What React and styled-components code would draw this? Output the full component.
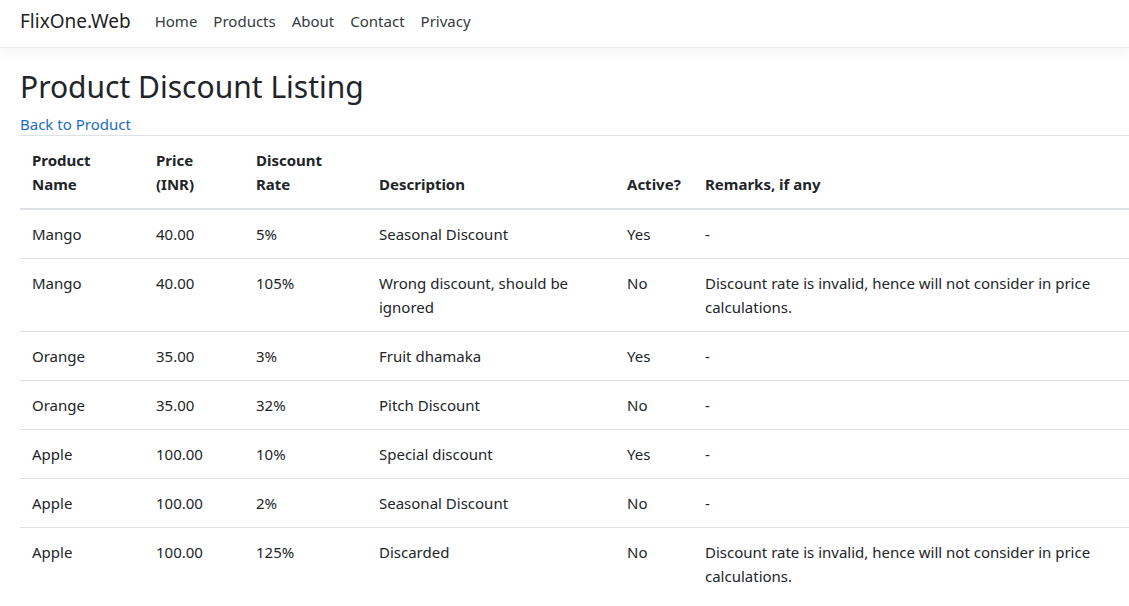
import React from 'react';
import styled, { createGlobalStyle } from 'styled-components';

const GlobalStyle = createGlobalStyle`
  html, body {
    margin: 0;
    padding: 0;
    background: #fff;
  }
  body {
    font-family: 'Segoe UI', 'Noto Sans', sans-serif;
    font-size: 15px;
    line-height: 24px;
    color: #212529;
  }
  * {
    box-sizing: border-box;
  }
`;

const Navbar = styled.header`
  height: 48px;
  display: flex;
  align-items: center;
  padding: 0 20px 6px;
  background: #fff;
  border-bottom: 1px solid #e5ece9;
  box-shadow: 0 4px 12px rgba(0, 0, 0, 0.05);
  margin-bottom: 21px;
`;

const Brand = styled.a`
  font-size: 19px;
  line-height: 30px;
  color: rgba(0, 0, 0, 0.9);
  text-decoration: none;
  margin-right: 16px;
`;

const NavList = styled.nav`
  display: flex;
`;

const NavLink = styled.a`
  padding: 0 8px;
  color: #343a40;
  text-decoration: none;
`;

const Main = styled.main`
  padding-left: 20px;
`;

const Title = styled.h1`
  font-size: 30px;
  font-weight: 400;
  line-height: 36px;
  margin: 0 0 8px;
`;

const BackLink = styled.a`
  display: block;
  color: #1b6ec2;
  text-decoration: none;
  line-height: 22px;
`;

const Table = styled.table`
  width: 100%;
  border-collapse: collapse;
  table-layout: fixed;
`;

const Th = styled.th`
  padding: 12px;
  text-align: left;
  vertical-align: bottom;
  font-weight: 700;
  border-top: 1px solid #dee2e6;
  border-bottom: 2px solid #dee2e6;
`;

const Td = styled.td`
  padding: 12px;
  vertical-align: top;
  border-top: 1px solid #dee2e6;
`;

const columns = [
  { label: 'Product Name', width: 124 },
  { label: 'Price (INR)', width: 100 },
  { label: 'Discount Rate', width: 123 },
  { label: 'Description', width: 248 },
  { label: 'Active?', width: 78 },
  { label: 'Remarks, if any' },
];

const invalid = 'Discount rate is invalid, hence will not consider in price calculations.';

const rows = [
  ['Mango', '40.00', '5%', 'Seasonal Discount', 'Yes', '-'],
  ['Mango', '40.00', '105%', 'Wrong discount, should be ignored', 'No', invalid],
  ['Orange', '35.00', '3%', 'Fruit dhamaka', 'Yes', '-'],
  ['Orange', '35.00', '32%', 'Pitch Discount', 'No', '-'],
  ['Apple', '100.00', '10%', 'Special discount', 'Yes', '-'],
  ['Apple', '100.00', '2%', 'Seasonal Discount', 'No', '-'],
  ['Apple', '100.00', '125%', 'Discarded', 'No', invalid],
];

const App = () => (
  <>
    <GlobalStyle />
    <Navbar>
      <Brand href="#">FlixOne.Web</Brand>
      <NavList>
        {['Home', 'Products', 'About', 'Contact', 'Privacy'].map((item) => (
          <NavLink key={item} href="#">
            {item}
          </NavLink>
        ))}
      </NavList>
    </Navbar>
    <Main>
      <Title>Product Discount Listing</Title>
      <BackLink href="#">Back to Product</BackLink>
      <Table>
        <colgroup>
          {columns.map((c) => (
            <col key={c.label} style={c.width ? { width: c.width } : undefined} />
          ))}
        </colgroup>
        <thead>
          <tr>
            {columns.map((c) => (
              <Th key={c.label}>{c.label}</Th>
            ))}
          </tr>
        </thead>
        <tbody>
          {rows.map((r, i) => (
            <tr key={i}>
              {r.map((cell, j) => (
                <Td key={j}>{cell}</Td>
              ))}
            </tr>
          ))}
        </tbody>
      </Table>
    </Main>
  </>
);

export default App;
